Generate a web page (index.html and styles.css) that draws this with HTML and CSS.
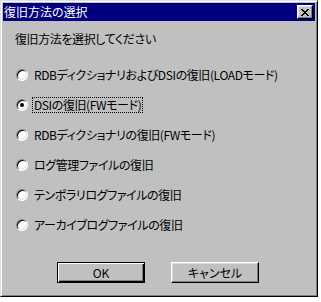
FILE: index.html
```html
<!DOCTYPE html>
<html>
<head>
    <title>復旧方法の選択</title>
    <link rel="stylesheet" href="styles.css">
</head>
<body>
    <div class="window">
        <div class="titlebar">
            <span class="title">復旧方法の選択</span>
            <span class="close">
                <svg width="8" height="7" viewBox="0 0 8 7" shape-rendering="crispEdges">
                    <path d="M0 0h2v1H0zM6 0h2v1H6zM1 1h2v1H1zM5 1h2v1H5zM2 2h4v1H2zM3 3h2v1H3zM2 4h4v1H2zM1 5h2v1H1zM5 5h2v1H5zM0 6h2v1H0zM6 6h2v1H6z" fill="#000"/>
                </svg>
            </span>
        </div>
        <div class="content">
            <div class="prompt">復旧方法を選択してください</div>
            <div class="options">
                <div class="option"><span class="radio"></span><span class="label">RDBディクショナリおよびDSIの復旧(LOADモード)</span></div>
                <div class="option"><span class="radio checked"></span><span class="label focus">DSIの復旧(FWモード)</span></div>
                <div class="option"><span class="radio"></span><span class="label">RDBディクショナリの復旧(FWモード)</span></div>
                <div class="option"><span class="radio"></span><span class="label">ログ管理ファイルの復旧</span></div>
                <div class="option"><span class="radio"></span><span class="label">テンポラリログファイルの復旧</span></div>
                <div class="option"><span class="radio"></span><span class="label">アーカイブログファイルの復旧</span></div>
            </div>
            <div class="buttons">
                <button class="btn default">OK</button>
                <button class="btn">キャンセル</button>
            </div>
        </div>
    </div>
</body>
</html>
```

FILE: styles.css
```css
body {
    margin: 0;
    background: #fff;
    font-family: "Noto Sans CJK JP", sans-serif;
    font-size: 12px;
    font-feature-settings: "palt";
    color: #000;
}
.window {
    width: 318px;
    height: 297px;
    box-sizing: border-box;
    background: #c0c0c0;
    border: 1px solid;
    border-color: #dfdfdf #000 #000 #dfdfdf;
    box-shadow: inset 1px 1px #fff, inset -1px -1px #808080;
    padding: 2px;
}
.titlebar {
    height: 18px;
    background: #000080;
    color: #fff;
    display: flex;
    align-items: center;
    justify-content: space-between;
    padding: 0 2px 0 1px;
}
.title {
    line-height: 16px;
}
.close {
    width: 16px;
    height: 14px;
    box-sizing: border-box;
    background: #c0c0c0;
    border: 1px solid;
    border-color: #fff #000 #000 #fff;
    box-shadow: inset -1px -1px #808080, inset 1px 1px #dfdfdf;
    display: flex;
    align-items: center;
    justify-content: center;
}
.close svg {
    display: block;
}
.content {
    padding: 10px 0 0 12px;
    letter-spacing: -0.4px;
}
.prompt {
    line-height: 16px;
}
.options {
    display: flex;
    flex-direction: column;
    gap: 14px;
    margin-top: 20px;
    padding-left: 1px;
}
.option {
    display: flex;
    align-items: center;
    height: 16px;
}
.radio {
    width: 12px;
    height: 12px;
    box-sizing: border-box;
    border-radius: 50%;
    background: #fff;
    border: 1px solid;
    border-color: #808080 #fff #fff #808080;
    box-shadow: inset 1px 1px #000, inset -1px -1px #dfdfdf;
    display: flex;
    align-items: center;
    justify-content: center;
}
.radio.checked::after {
    content: "";
    width: 4px;
    height: 4px;
    border-radius: 50%;
    background: #000;
}
.label {
    margin-left: 4px;
    padding: 0 1px;
    line-height: 14px;
    border: 1px solid transparent;
}
.label.focus {
    border: 1px dotted #000;
}
.buttons {
    display: flex;
    gap: 26px;
    margin-top: 29px;
    padding-left: 42px;
}
.btn {
    width: 88px;
    height: 21px;
    box-sizing: border-box;
    background: #c0c0c0;
    font-family: "Noto Sans CJK JP", sans-serif;
    font-size: 12px;
    font-feature-settings: "palt";
    color: #000;
    padding: 0;
    border: 1px solid;
    border-color: #fff #000 #000 #fff;
    box-shadow: inset -1px -1px #808080, inset 1px 1px #dfdfdf;
}
.btn.default {
    border-color: #000;
    box-shadow: inset 1px 1px #fff, inset -1px -1px #000, inset -2px -2px #808080;
}
```
